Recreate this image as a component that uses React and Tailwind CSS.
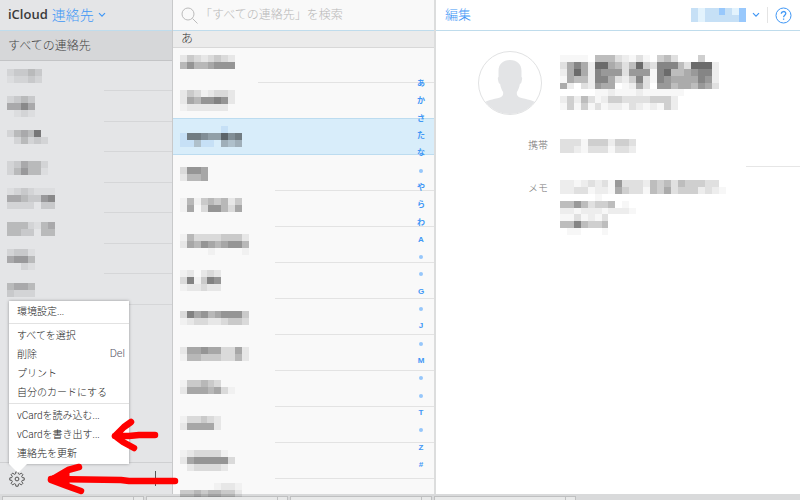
import React, { useState } from 'react';

// opacity of black for each mosaic digit, letters are blues
const SHADES = [0, 0.03, 0.07, 0.12, 0.19, 0.26, 0.33, 0.4, 0.48, 0.58];
const BLUES = { a: '#e3f3fd', b: '#c6e0f6', c: '#98c8fc' };

const groups = [
  ['23343', '12232'],
  ['2343', '5575', '0121'],
  ['245480', '024232'],
  ['235442', '246441'],
  ['1232111', '5543367', '2222033'],
  ['4442145', '4433044'],
  ['2331', '5664', '0021'],
  ['4554', '3222'],
];

const contacts = [
  { rows: ['24323432', '57556777'], pad: 'pt-[7px]' },
  { rows: ['24312332', '26577872', '12222220'], pad: 'pt-[7px]' },
  { rows: ['000000b00', 'b88766978', 'bb4bb0545'], pad: 'pt-[7px]' },
  { rows: ['3776', '2556'], pad: 'pt-3' },
  { rows: ['151454524', '160377536'], pad: 'pt-[7px]' },
  { rows: ['1533334442', '2657656775', '0000100001'], pad: 'pt-[7px]' },
  { rows: ['120232', '381487', '122322'], pad: 'pt-[7px]' },
  { rows: ['3867567774', '1233223443'], pad: 'pt-3' },
  { rows: ['2667663362', '1554443352'], pad: 'pt-3' },
  { rows: ['14454300', '26665631'], pad: 'pt-[9px]' },
  { rows: ['133432', '266662'], pad: 'pt-[9px]' },
  { rows: ['12333310', '26777773', '02333320'], pad: 'pt-[7px]' },
  { rows: ['000001221', '445455442'], pad: 'pt-1' },
];

const nameRows = [
  '11110555321310453000400',
  '36862996535943888539992',
  '26962877737771895567882',
  '16552886324831876666872',
  '62032766012630775665763',
  '00000112111211111100000',
  '24253124433334442000000',
  '14141312213212142000000',
];

const memoRows = [
  '221232317333254535444330',
  '223312216433154634442321',
  '000001000000000000000000',
  '557534450100000000000000',
  '221222122210000000000000',
  '113121300000000000000000',
  '558544500000000000000000',
  '011000100000000000000000',
];

const indexKeys = 'あかさたな•やらわA••G•J•M••T•Z#'.split('');

const menuGroups = [
  [{ label: '環境設定...' }],
  [
    { label: 'すべてを選択' },
    { label: '削除', hint: 'Del' },
    { label: 'プリント' },
    { label: '自分のカードにする' },
  ],
  [
    { label: 'vCardを読み込む...' },
    { label: 'vCardを書き出す...' },
    { label: '連絡先を更新' },
  ],
];

function Mosaic({ rows }) {
  const cols = rows[0].length;
  return (
    <svg
      width={Math.round(cols * 6.9)}
      height={Math.round(rows.length * 6.9)}
      viewBox={`0 0 ${cols} ${rows.length}`}
      preserveAspectRatio="none"
      shapeRendering="crispEdges"
      className="block shrink-0"
      aria-hidden="true"
    >
      {rows.map((row, y) =>
        row.split('').map((c, x) =>
          c === '0' ? null : (
            <rect
              key={`${x}-${y}`}
              x={x}
              y={y}
              width="1"
              height="1"
              fill={BLUES[c] || '#000'}
              fillOpacity={BLUES[c] ? 1 : SHADES[c]}
            />
          )
        )
      )}
    </svg>
  );
}

function Chevron() {
  return (
    <svg width="8" height="6" viewBox="0 0 8 6" fill="none" stroke="#3f97f6" strokeWidth="1.2">
      <path d="M1 1.2l3 3 3-3" />
    </svg>
  );
}

// four points per tooth, eight teeth
const gearPoints = Array.from({ length: 8 }, (_, i) =>
  [
    [-15, 5.4],
    [-9, 7.3],
    [9, 7.3],
    [15, 5.4],
  ]
    .map(([offset, r]) => {
      const a = ((i * 45 + offset) * Math.PI) / 180;
      return `${(8 + r * Math.sin(a)).toFixed(2)},${(8 - r * Math.cos(a)).toFixed(2)}`;
    })
    .join(' ')
).join(' ');

function Gear() {
  return (
    <svg width="16" height="16" viewBox="0 0 16 16" fill="none" stroke="#555" strokeLinejoin="round">
      <polygon points={gearPoints} />
      <circle cx="8" cy="8" r="1.9" />
    </svg>
  );
}

function SettingsMenu() {
  return (
    <div className="absolute bottom-[30px] left-[9px] z-20 w-[120px] bg-white shadow-[0_0_3px_rgba(0,0,0,0.35)]">
      {menuGroups.map((group, i) => (
        <ul key={i} className="border-t border-[#e2e2e2] pt-0.5 pb-px first:border-t-0 first:pt-px first:pb-0.5 last:pb-0">
          {group.map((item) => (
            <li key={item.label}>
              <button className="flex h-[19px] w-full items-center justify-between pr-1 pl-2 text-[10px] whitespace-nowrap text-[#222] hover:bg-gray-100">
                <span>{item.label}</span>
                {item.hint && <span className="text-[11px] text-[#556]">{item.hint}</span>}
              </button>
            </li>
          ))}
        </ul>
      ))}
      <svg width="20" height="9" viewBox="0 0 20 9" className="absolute top-full left-0">
        <path d="M0 0h18l-9 9z" fill="#fff" />
      </svg>
    </div>
  );
}

function Sidebar() {
  const [menuOpen, setMenuOpen] = useState(true);

  return (
    <aside className="relative flex w-[173px] shrink-0 flex-col border-r border-[#c8c9ca] bg-[#e4e5e7]">
      <header className="flex h-[31px] shrink-0 items-center border-b border-[#bfdcec] pl-2">
        <span className="font-['Open_Sans'] text-[13px] font-semibold text-[#3a3a3a]">iCloud</span>
        <button className="ml-1 flex items-center gap-1 text-sm text-[#3f97f6]">
          連絡先
          <Chevron />
        </button>
      </header>
      <button className="flex h-[30px] shrink-0 items-center border-b border-[#c3c4c6] bg-[#d6d7d9] pl-2 text-xs text-[#444]">
        すべての連絡先
      </button>
      <ul className="min-h-0 flex-1 overflow-hidden">
        {groups.map((rows, i) => (
          <li key={i} className="flex odd:h-[30px] even:h-[31px]">
            <button aria-label={`グループ ${i + 1}`} className="flex w-[104px] items-center pl-[7px]">
              <Mosaic rows={rows} />
            </button>
            <span className="flex-1 border-b border-[#d5d6d8]" />
          </li>
        ))}
      </ul>
      <footer className="flex h-8 shrink-0 items-center justify-between border-t border-[#cfd0d2] px-[9px]">
        <button aria-label="設定" onClick={() => setMenuOpen(!menuOpen)}>
          <Gear />
        </button>
        <button aria-label="追加">
          <svg width="15" height="15" viewBox="0 0 15 15" stroke="#555">
            <path d="M0 7.5h15M7.5 0v15" />
          </svg>
        </button>
      </footer>
      {menuOpen && <SettingsMenu />}
    </aside>
  );
}

function ContactList() {
  const [selected, setSelected] = useState(2);

  return (
    <section className="relative flex w-[263px] shrink-0 flex-col border-r-2 border-[#dcdddd] bg-[#f9f9f9]">
      <label className="flex h-[31px] shrink-0 items-center gap-0.5 border-b border-[#bfdcec] pl-2">
        <svg width="17" height="17" viewBox="0 0 17 17" fill="none" stroke="#bbb">
          <circle cx="7" cy="7" r="6" />
          <path d="M11.5 11.5l5 5" />
        </svg>
        <input
          type="search"
          aria-label="検索"
          placeholder="「すべての連絡先」を検索"
          className="min-w-0 flex-1 bg-transparent text-xs outline-none placeholder:text-[#b8b8b8]"
        />
      </label>
      <h2 className="flex h-[17px] shrink-0 items-center border-b border-[#d8d8d8] bg-[#ebebeb] pl-2 text-xs text-[#333]">
        あ
      </h2>
      <ul className="min-h-0 flex-1">
        {contacts.map(({ rows, pad }, i) => (
          <li
            key={i}
            className={
              i === selected
                ? 'flex h-9 border-b border-[#bcdcf0] bg-[#d8edfa]'
                : i === selected - 1
                  ? 'flex h-9 border-b border-[#bcdcf0]'
                  : 'flex h-9 first:h-[35px]'
            }
          >
            <button
              aria-label={`連絡先 ${i + 1}`}
              onClick={() => setSelected(i)}
              className={`flex items-start pl-[7px] ${i === 0 ? 'w-[85px]' : 'w-[102px]'} ${pad}`}
            >
              <Mosaic rows={rows} />
            </button>
            <span
              className={
                i === selected || i === selected - 1
                  ? 'flex-1'
                  : 'flex-1 border-b border-[#e3e3e3]'
              }
            />
          </li>
        ))}
      </ul>
      <nav className="absolute top-[76px] right-[3px] bottom-[21px] flex w-5 flex-col items-center justify-between font-['Liberation_Sans','Noto_Sans_CJK_JP',sans-serif]">
        {indexKeys.map((key, i) =>
          key === '•' ? (
            <span key={i} className="flex h-4 items-center">
              <span className="size-1 rounded-full bg-[#96c7fb]" />
            </span>
          ) : (
            <a key={i} href="#list" className="h-4 text-[8px] leading-4 font-bold text-[#3f97f6]">
              {key}
            </a>
          )
        )}
      </nav>
    </section>
  );
}

function Avatar() {
  return (
    <svg width="64" height="64" viewBox="0 0 64 64" className="shrink-0">
      <defs>
        <clipPath id="avatar">
          <circle cx="32" cy="32" r="31" />
        </clipPath>
      </defs>
      <g clipPath="url(#avatar)" fill="#e3e4e6">
        <path d="M32 9c-7 0-11.500 4-11.500 11v6c-1 .3-.8 2 0 5 .4 1.500 1.200 1.800 1.600 2 .6 3.500 1.700 6 3 8 .4 3-.5 4.500-3 5.500C15 48.500 8 49 5 53v12h54V53c-3-4-10-4.500-17.100-6.500-2.500-1-3.400-2.500-3-5.500 1.300-2 2.400-4.500 3-8 .4-.2 1.200-.5 1.600-2 .8-3 1-4.700 0-5v-6C43.500 13 39 9 32 9z" />
      </g>
      <circle cx="32" cy="32" r="31.500" fill="none" stroke="#e1e2e3" />
    </svg>
  );
}

function Detail() {
  return (
    <main className="flex min-w-0 flex-1 flex-col bg-white">
      <header className="flex h-[31px] shrink-0 items-center border-b border-[#bfdcec] pr-2 pl-[9px]">
        <button className="text-[13px] text-[#3f97f6]">編集</button>
        <button aria-label="アカウント" className="ml-auto flex items-center gap-1.5">
          <Mosaic rows={['babbcbac', 'babbbbbc']} />
          <Chevron />
        </button>
        <span className="mx-[7px] h-4 w-px bg-[#e4e4e4]" />
        <button aria-label="ヘルプ">
          <svg width="17" height="17" viewBox="0 0 17 17" fill="none" stroke="#3f97f6">
            <circle cx="8.5" cy="8.5" r="7.5" />
            <path d="M6.300 6.800c0-3 4.500-3 4.500-.2 0 1.700-2.200 1.700-2.200 3.600M8.600 11.500v1.300" strokeWidth="1.300" />
          </svg>
        </button>
      </header>
      <div className="grid grid-cols-[112px_1fr] gap-x-3 pt-5">
        <div className="flex justify-end pr-1.5">
          <Avatar />
        </div>
        <div className="pt-1">
          <Mosaic rows={nameRows} />
        </div>
        <div className="pt-[23px] text-right text-[10px] text-[#777]">携帯</div>
        <div className="flex flex-col pt-6 pb-3">
          <Mosaic rows={['33314442443', '33213331332']} />
          <span className="mt-[13px] ml-[186px] h-px bg-[#e6e6e6]" />
        </div>
        <div className="pt-0.5 text-right text-[10px] text-[#777]">メモ</div>
        <div className="pt-px">
          <Mosaic rows={memoRows} />
        </div>
      </div>
    </main>
  );
}

// hand-drawn red arrows pointing at the export item and the gear
function Arrows() {
  return (
    <svg
      width="190"
      height="90"
      viewBox="0 0 190 90"
      fill="none"
      stroke="#f00"
      strokeWidth="6.5"
      strokeLinecap="round"
      strokeLinejoin="round"
      className="pointer-events-none absolute bottom-0 left-0 z-30"
    >
      <path d="M155 25h-16l-10 1h-14M131 12l-7 5-9 9 8 6 11 6" />
      <path d="M175 71h-46l-8-1-70-1M79 57l-11 3-17 10 16 6 14 5" />
      <path d="M51 70l17-8v12z" strokeWidth="3" fill="#f00" />
    </svg>
  );
}

export default function App() {
  return (
    <div className="relative flex h-screen w-full flex-col overflow-hidden bg-[#d9dadb] font-['Roboto','Noto_Sans_CJK_JP',sans-serif] font-light">
      <div className="relative z-10 flex min-h-0 flex-1">
        <Sidebar />
        <ContactList />
        <Detail />
      </div>
      <div className="flex h-1.5 shrink-0 gap-0.5 pt-0.5 pl-0.5">
        {[0, 1, 2, 3].map((i) => (
          <div key={i} className="flex w-[142px] justify-end border border-b-0 border-[#bfc0c1] bg-[#e8e9e9]">
            <span className="w-2.5 border-l border-[#bfc0c1]" />
          </div>
        ))}
      </div>
      <Arrows />
    </div>
  );
}
